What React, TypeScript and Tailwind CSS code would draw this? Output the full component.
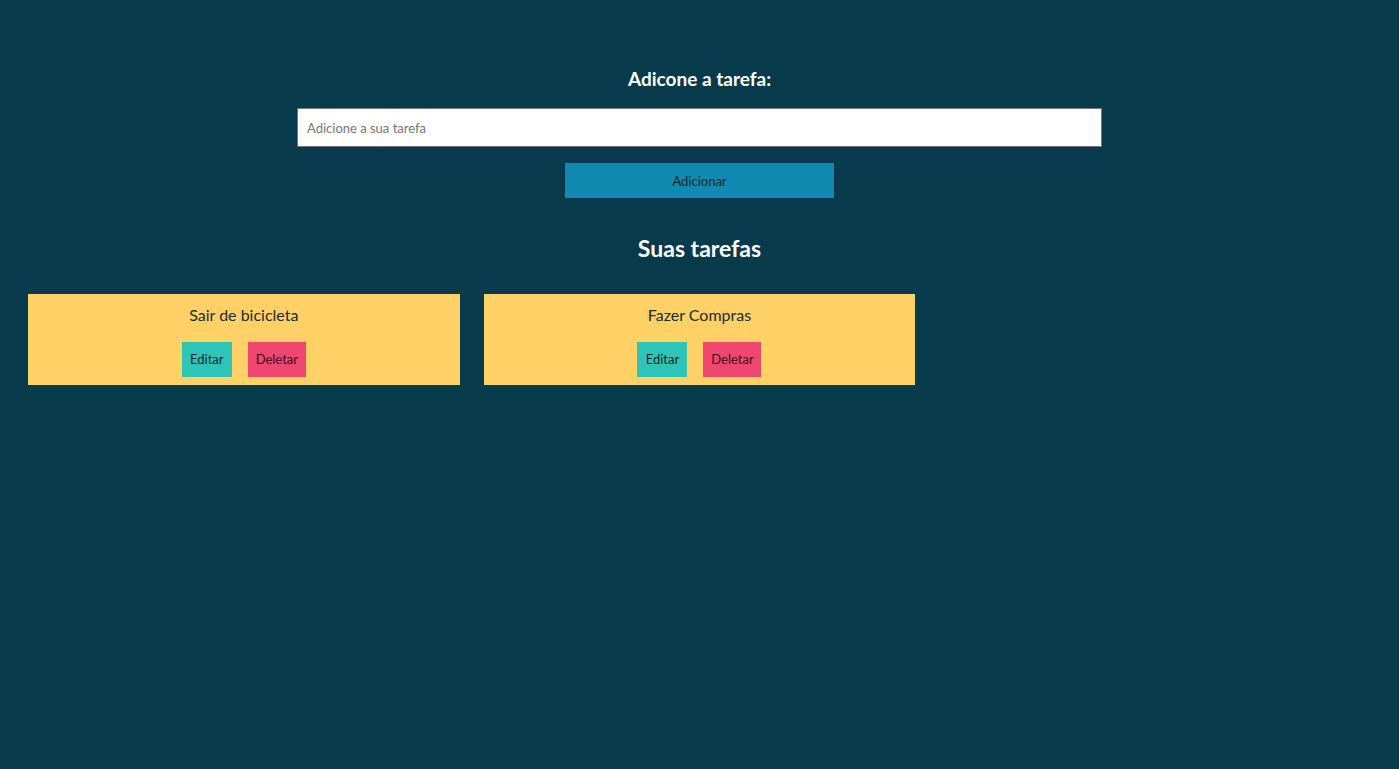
import React from "react";

const tasks = ["Sair de bicicleta", "Fazer Compras"];

export default function App() {
  return (
    <div
      className="min-h-[769px] w-full bg-[#073a4b] text-[#073b4c]"
      style={{ fontFamily: "Lato, 'Open Sans', sans-serif" }}
    >
      <div className="flex flex-col items-center pt-[65px]">
        <h2 className="text-[19px] leading-[28px] font-bold text-white">Adicone a tarefa:</h2>
        <input
          className="mt-[15px] h-[39px] w-[805px] border border-[#767676] bg-white px-[9px] text-[13px] text-[#333] outline-none placeholder:text-[#757575]"
          placeholder="Adicione a sua tarefa"
        />
        <button className="mt-[16px] h-[35px] w-[269px] bg-[#118ab2] pt-[2px] text-[13px] text-[#0b2530]">
          Adicionar
        </button>
        <h2 className="mt-[34px] text-[23px] leading-[32px] font-bold text-white">Suas tarefas</h2>
      </div>
      <div className="mt-[30px] grid grid-cols-3 gap-[24px] px-[28px]">
        {tasks.map((t) => (
          <div key={t} className="flex h-[91px] flex-col items-center bg-[#ffd166] pt-[10px]">
            <p className="text-[16px] leading-[22px] text-[#1d2a2e]">{t}</p>
            <div className="mt-[16px] flex gap-[16px]">
              <button className="h-[35px] w-[50px] bg-[#2ec5b6] pt-[1px] text-[13px] text-[#0b2530]">Editar</button>
              <button className="h-[35px] w-[58px] bg-[#ef476f] pt-[1px] text-[13px] text-[#3a0b14]">Deletar</button>
            </div>
          </div>
        ))}
      </div>
    </div>
  );
}
